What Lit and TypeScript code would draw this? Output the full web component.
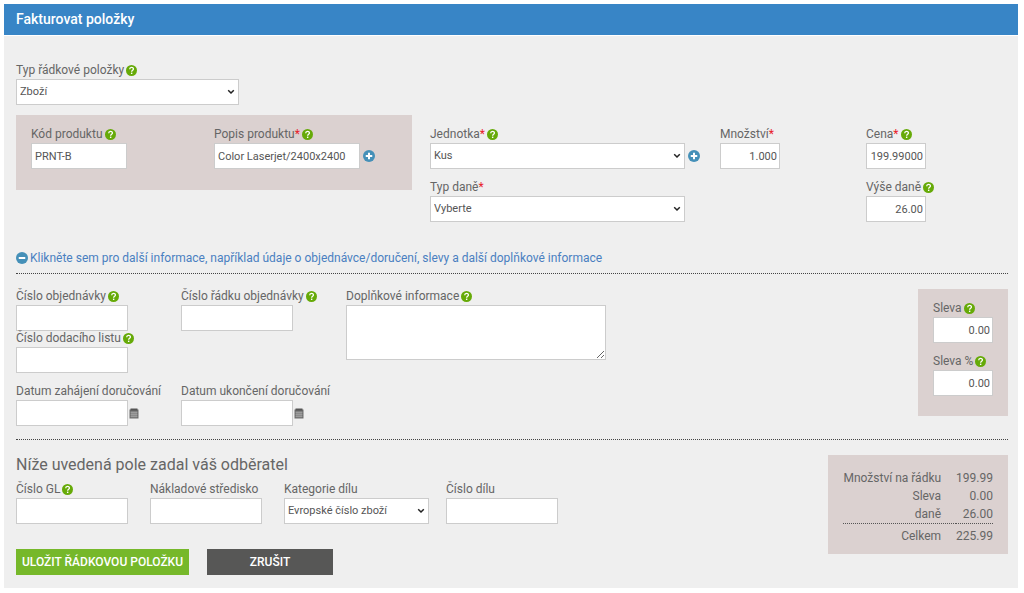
import { LitElement, html, css, svg, nothing } from "lit";
import { customElement, property } from "lit/decorators.js";

const helpIcon = html`<svg class="icon" width="11" height="11" viewBox="0 0 22 22" aria-hidden="true">
  <circle cx="11" cy="11" r="11" fill="#66aa08" />
  <path d="M7.400 8.600c0-5 7.400-4.800 7.400-.6 0 2.700-3.500 2.700-3.500 5.400" fill="none" stroke="#fff" stroke-width="2.600" />
  <rect x="9.900" y="15.200" width="2.800" height="2.800" fill="#fff" />
</svg>`;

const roundIcon = (plus: boolean) => html`<svg class="icon" width="12" height="12" viewBox="0 0 24 24" aria-hidden="true">
  <circle cx="12" cy="12" r="12" fill="#4590b8" />
  <path d="M5.500 12h13" stroke="#fff" stroke-width="4" />
  ${plus ? svg`<path d="M12 5.500v13" stroke="#fff" stroke-width="4" />` : nothing}
</svg>`;

const calendarIcon = html`<svg class="icon" width="10" height="11" viewBox="0 0 20 22" aria-hidden="true">
  <path d="M1 3h18v18H1z" fill="#6e6e6e" />
  <path d="M3 1h14v4H3z" fill="#555" />
  <path d="M3 8.500h14M3 12.500h14M3 16.500h14M6 7v12M10 7v12M14 7v12" stroke="#c4c4c4" stroke-width="1" />
</svg>`;

@customElement("form-field")
class FormField extends LitElement {
  @property() label = "";
  @property() name = "";
  @property() kind = "text";
  @property() value = "";
  @property() action = "";
  @property({ type: Boolean }) required = false;
  @property({ type: Boolean }) help = false;
  @property({ type: Boolean }) numeric = false;

  static styles = css`
    :host {
      display: block;
      color: #666;
      font: 12px/14px Roboto, "Liberation Sans", sans-serif;
    }
    .label-row {
      display: flex;
      align-items: center;
      gap: 2px;
      height: 14px;
      padding-bottom: 2px;
      white-space: nowrap;
    }
    .star {
      color: #e8202a;
    }
    .control-row {
      display: flex;
      align-items: center;
      gap: var(--action-gap, 1px);
    }
    .control {
      box-sizing: border-box;
      width: var(--control-width, 112px);
      height: 26px;
      margin: 0;
      padding: 0 3px;
      border: 1px solid #ccc;
      border-radius: 0;
      background-color: #fff;
      color: #555;
      font: 11px/16px Roboto, "Liberation Sans", sans-serif;
    }
    .select {
      appearance: none;
      padding-right: 16px;
      background: #fff
        url("data:image/svg+xml,%3Csvg xmlns='http://www.w3.org/2000/svg' width='8' height='6' viewBox='0 0 8 6'%3E%3Cpath d='M1.200 1.200 4 4l2.800-2.800' fill='none' stroke='%23222' stroke-width='1.500'/%3E%3C/svg%3E")
        no-repeat right 3px center;
    }
    .numeric {
      padding-right: 2px;
      text-align: right;
    }
    .area {
      display: block;
      height: 55px;
    }
    .icon-button {
      display: flex;
      padding: 0;
      border: 0;
      background: none;
      cursor: pointer;
    }
    .icon {
      display: block;
      flex: none;
    }
  `;

  private control() {
    if (this.kind === "select")
      return html`<select id="control" class="control select" name=${this.name}><option>${this.value}</option></select>`;
    if (this.kind === "area")
      return html`<textarea id="control" class="control area" name=${this.name}></textarea>`;
    return html`<input id="control" class="control ${this.numeric ? "numeric" : ""}" type="text" name=${this.name} .value=${this.value} />`;
  }

  render() {
    return html`
      <div class="label-row">
        <label for="control">${this.label}${this.required ? html`<span class="star">*</span>` : nothing}</label>
        ${this.help ? helpIcon : nothing}
      </div>
      <div class="control-row">
        ${this.control()}
        ${this.action
          ? html`<button class="icon-button" type="button" aria-label=${this.label}>
              ${this.action === "date" ? calendarIcon : roundIcon(true)}
            </button>`
          : nothing}
      </div>
    `;
  }
}

@customElement("app-root")
class AppRoot extends LitElement {
  static styles = css`
    :host {
      display: block;
      padding: 4px 6px 4px 4px;
      background: #fff;
      color: #666;
      font: 12px/16px Roboto, "Liberation Sans", sans-serif;
    }
    .title {
      margin: 0;
      padding: 5px 12px 6px;
      background: #3885c6;
      color: #fff;
      font-size: 14px;
      line-height: 20px;
      font-weight: 500;
    }
    .body {
      display: block;
      margin-top: 1px;
      padding: 27px 10px 13px 12px;
      background: #efefef;
    }
    .shaded {
      background: #dbd1d0;
    }
    .stack {
      display: flex;
      flex-direction: column;
      gap: 11px;
    }
    .type {
      --control-width: 223px;
    }
    .item {
      display: grid;
      grid-template-columns: 414fr 290fr 146fr 142fr;
      align-items: start;
      margin-top: 10px;
    }
    .product {
      display: grid;
      grid-template-columns: 183fr 183fr;
      margin-right: 18px;
      padding: 12px 15px 21px;
    }
    .offset {
      padding-top: 12px;
    }
    .code {
      --control-width: 96px;
    }
    .description {
      --control-width: 146px;
      --action-gap: 3px;
    }
    .unit {
      --control-width: 255px;
      --action-gap: 3px;
    }
    .amount {
      --control-width: 60px;
    }
    .toggle {
      display: flex;
      align-items: center;
      gap: 2px;
      margin-top: 28px;
      padding-bottom: 7px;
      border-bottom: 1px dotted #444;
      color: #4a7fc1;
      text-decoration: none;
    }
    .icon {
      display: block;
      flex: none;
    }
    .details {
      display: grid;
      grid-template-columns: 165px 165px 1fr auto;
      align-items: start;
      padding: 15px 0 23px;
      border-bottom: 1px dotted #444;
    }
    .detail-fields {
      display: grid;
      grid-column: span 2;
      grid-template-columns: 165px 165px;
      align-items: start;
      margin-bottom: -10px;
    }
    .dates {
      margin-top: 11px;
    }
    .notes {
      --control-width: 260px;
    }
    .discount {
      padding: 12px 15px 20px;
    }
    .buyer {
      display: flex;
      justify-content: space-between;
      align-items: flex-start;
      padding-top: 15px;
    }
    .heading {
      margin: 0 0 7px;
      font-size: 16px;
      line-height: 20px;
      font-weight: 400;
    }
    .buyer-fields {
      display: grid;
      grid-template-columns: 134px 134px 162px 112px;
    }
    .category {
      --control-width: 145px;
    }
    .actions {
      display: flex;
      gap: 18px;
      margin-top: 25px;
    }
    .button {
      min-width: 126px;
      height: 26px;
      padding: 0 6px;
      border: 0;
      background: #575756;
      color: #fff;
      font: 500 12px/16px Roboto, "Liberation Sans", sans-serif;
      text-transform: uppercase;
    }
    .primary {
      background: #76b82a;
    }
    .totals {
      padding: 14px 15px 9px;
    }
    .table {
      border-collapse: collapse;
      text-align: right;
    }
    .table th {
      padding: 1px 15px 1px 0;
      font-weight: 400;
    }
    .table td {
      padding: 1px 0;
    }
    .table .grand th,
    .table .grand td {
      padding-top: 4px;
      border-top: 1px dotted #555;
    }
  `;

  render() {
    return html`
      <h1 class="title">Fakturovat položky</h1>
      <form class="body">
        <form-field class="type" kind="select" name="lineType" label="Typ řádkové položky" value="Zboží" help></form-field>

        <div class="item">
          <div class="shaded product">
            <form-field class="code" name="code" label="Kód produktu" value="PRNT-B" help></form-field>
            <form-field class="description" name="description" label="Popis produktu" value="Color Laserjet/2400x2400" action="add" required help></form-field>
          </div>
          <div class="stack offset unit">
            <form-field kind="select" name="unit" label="Jednotka" value="Kus" action="add" required help></form-field>
            <form-field kind="select" name="taxType" label="Typ daně" value="Vyberte" required></form-field>
          </div>
          <div class="stack offset amount">
            <form-field name="quantity" label="Množství" value="1.000" required numeric></form-field>
          </div>
          <div class="stack offset amount">
            <form-field name="price" label="Cena" value="199.99000" required help numeric></form-field>
            <form-field name="taxAmount" label="Výše daně" value="26.00" help numeric></form-field>
          </div>
        </div>

        <a class="toggle" href="#">
          ${roundIcon(false)}
          <span>Klikněte sem pro další informace, například údaje o objednávce/doručení, slevy a další doplňkové informace</span>
        </a>

        <div class="details">
          <div class="detail-fields">
            <div>
              <form-field name="order" label="Číslo objednávky" help></form-field>
              <form-field name="deliveryNote" label="Číslo dodacího listu" help></form-field>
            </div>
            <form-field name="orderLine" label="Číslo řádku objednávky" help></form-field>
            <form-field class="dates" name="deliveryStart" label="Datum zahájení doručování" action="date"></form-field>
            <form-field class="dates" name="deliveryEnd" label="Datum ukončení doručování" action="date"></form-field>
          </div>
          <form-field class="notes" kind="area" name="notes" label="Doplňkové informace" help></form-field>
          <div class="shaded stack discount amount">
            <form-field name="discount" label="Sleva" value="0.00" help numeric></form-field>
            <form-field name="discountPercent" label="Sleva %" value="0.00" help numeric></form-field>
          </div>
        </div>

        <div class="buyer">
          <div>
            <h2 class="heading">Níže uvedená pole zadal váš odběratel</h2>
            <div class="buyer-fields">
              <form-field name="gl" label="Číslo GL" help></form-field>
              <form-field name="costCentre" label="Nákladové středisko"></form-field>
              <form-field class="category" kind="select" name="category" label="Kategorie dílu" value="Evropské číslo zboží"></form-field>
              <form-field name="part" label="Číslo dílu"></form-field>
            </div>
            <div class="actions">
              <button class="button primary" type="button">Uložit řádkovou položku</button>
              <button class="button" type="button">Zrušit</button>
            </div>
          </div>
          <div class="shaded totals">
            <table class="table">
              <tbody>
                <tr><th scope="row">Množství na řádku</th><td>199.99</td></tr>
                <tr><th scope="row">Sleva</th><td>0.00</td></tr>
                <tr><th scope="row">daně</th><td>26.00</td></tr>
                <tr class="grand"><th scope="row">Celkem</th><td>225.99</td></tr>
              </tbody>
            </table>
          </div>
        </div>
      </form>
    `;
  }
}
